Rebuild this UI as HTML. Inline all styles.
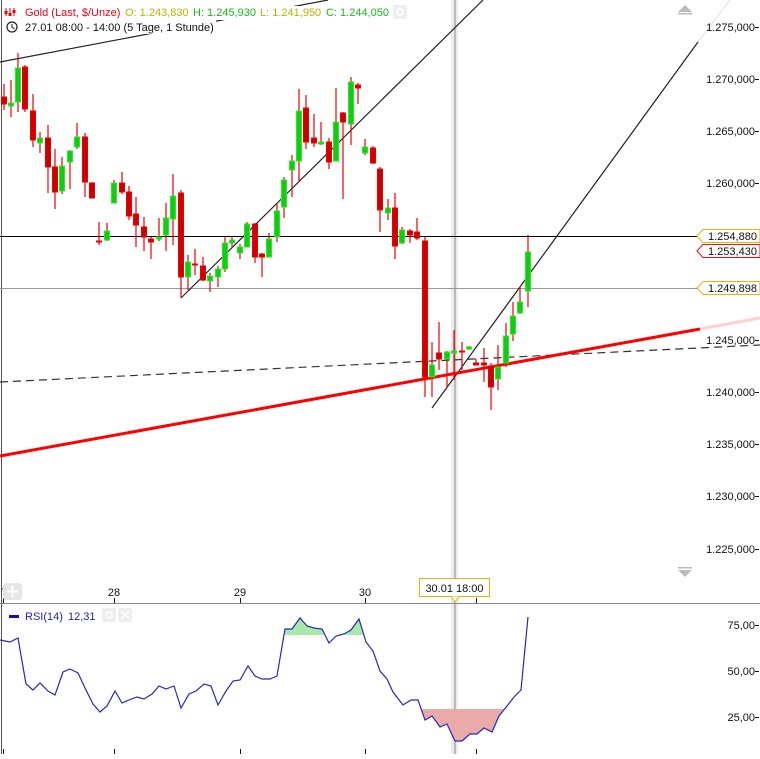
<!DOCTYPE html>
<html><head><meta charset="utf-8"><style>
html,body{margin:0;padding:0;background:#fff;}
body{width:760px;height:754px;overflow:hidden;font-family:"Liberation Sans",Arial,sans-serif;}
svg text{font-family:"Liberation Sans",Arial,sans-serif;font-size:11px;}
</style></head><body>
<svg width="760" height="754" viewBox="0 0 760 754" xmlns="http://www.w3.org/2000/svg">
<rect width="760" height="754" fill="#fff"/>
<rect x="451" y="0" width="7" height="754" fill="#ececec"/>
<line x1="455" y1="0" x2="455" y2="754" stroke="#888" stroke-width="1"/>
<line x1="1.5" y1="0" x2="1.5" y2="754" stroke="#555" stroke-width="1"/>

<line x1="0" y1="236.5" x2="700" y2="236.5" stroke="#000" stroke-width="1"/>
<line x1="0" y1="288.5" x2="700" y2="288.5" stroke="#999" stroke-width="1"/>
<line x1="0" y1="382" x2="760" y2="345" stroke="#333" stroke-width="1.2" stroke-dasharray="8,5"/>
<line x1="0" y1="62" x2="328" y2="0" stroke="#222" stroke-width="1.2"/>
<line x1="181" y1="298" x2="483" y2="0" stroke="#222" stroke-width="1.2"/>
<line x1="432" y1="408" x2="698" y2="42" stroke="#222" stroke-width="1.2"/>
<line x1="698" y1="42" x2="730" y2="0" stroke="#ddd" stroke-width="1"/>
<line x1="0" y1="456" x2="700" y2="329" stroke="#f00" stroke-width="3"/>
<line x1="700" y1="329" x2="760" y2="318" stroke="#ffd0d0" stroke-width="3"/>

<g stroke="#e00" stroke-width="1.2">
<line x1="4" y1="84" x2="4" y2="110"/><line x1="11" y1="80" x2="11" y2="117"/><line x1="18" y1="53" x2="18" y2="112"/><line x1="25" y1="65" x2="25" y2="112"/><line x1="33" y1="94" x2="33" y2="147"/><line x1="40" y1="132" x2="40" y2="153"/><line x1="48" y1="125" x2="48" y2="193"/><line x1="55" y1="149" x2="55" y2="209"/><line x1="62" y1="157" x2="62" y2="194"/><line x1="70" y1="150" x2="70" y2="189"/><line x1="77" y1="123" x2="77" y2="149"/><line x1="85" y1="133" x2="85" y2="197"/><line x1="92" y1="182" x2="92" y2="198"/><line x1="99" y1="222" x2="99" y2="245"/><line x1="107" y1="223" x2="107" y2="241"/><line x1="114" y1="180" x2="114" y2="203"/><line x1="122" y1="172" x2="122" y2="194"/><line x1="129" y1="186" x2="129" y2="220"/><line x1="136" y1="197" x2="136" y2="247"/><line x1="144" y1="217" x2="144" y2="251"/><line x1="151" y1="237" x2="151" y2="259"/><line x1="159" y1="218" x2="159" y2="241"/><line x1="166" y1="203" x2="166" y2="251"/><line x1="173" y1="174" x2="173" y2="245"/><line x1="181" y1="190" x2="181" y2="298"/><line x1="188" y1="255" x2="188" y2="290"/><line x1="195" y1="249" x2="195" y2="275"/><line x1="203" y1="257" x2="203" y2="281"/><line x1="210" y1="273" x2="210" y2="292"/><line x1="218" y1="266" x2="218" y2="287"/><line x1="225" y1="237" x2="225" y2="272"/><line x1="232" y1="237" x2="232" y2="248"/><line x1="240" y1="244" x2="240" y2="259"/><line x1="247" y1="222" x2="247" y2="247"/><line x1="255" y1="223" x2="255" y2="263"/><line x1="262" y1="253" x2="262" y2="277"/><line x1="269" y1="233" x2="269" y2="257"/><line x1="277" y1="203" x2="277" y2="242"/><line x1="284" y1="177" x2="284" y2="218"/><line x1="292" y1="155" x2="292" y2="197"/><line x1="299" y1="89" x2="299" y2="182"/><line x1="306" y1="95" x2="306" y2="149"/><line x1="314" y1="114" x2="314" y2="147"/><line x1="321" y1="122" x2="321" y2="145"/><line x1="329" y1="138" x2="329" y2="169"/><line x1="336" y1="88" x2="336" y2="161"/><line x1="343" y1="112" x2="343" y2="199"/><line x1="351" y1="77" x2="351" y2="145"/><line x1="358" y1="83" x2="358" y2="104"/><line x1="365" y1="139" x2="365" y2="155"/><line x1="373" y1="146" x2="373" y2="164"/><line x1="380" y1="167" x2="380" y2="232"/><line x1="388" y1="199" x2="388" y2="220"/><line x1="395" y1="193" x2="395" y2="259"/><line x1="402" y1="227" x2="402" y2="244"/><line x1="410" y1="229" x2="410" y2="243"/><line x1="417" y1="218" x2="417" y2="240"/><line x1="425" y1="237" x2="425" y2="397"/><line x1="432" y1="342" x2="432" y2="397"/><line x1="439" y1="322" x2="439" y2="370"/><line x1="447" y1="351" x2="447" y2="387"/><line x1="454" y1="330" x2="454" y2="380"/><line x1="462" y1="342" x2="462" y2="370"/><line x1="469" y1="346" x2="469" y2="350"/><line x1="476" y1="359" x2="476" y2="365"/><line x1="484" y1="348" x2="484" y2="382"/><line x1="491" y1="363" x2="491" y2="410"/><line x1="498" y1="345" x2="498" y2="390"/><line x1="506" y1="323" x2="506" y2="367"/><line x1="513" y1="302" x2="513" y2="341"/><line x1="520" y1="287" x2="520" y2="314"/><line x1="528" y1="235" x2="528" y2="307"/>
</g>
<g fill="#cc0000" stroke="#e00" stroke-width="1">
<rect x="1.5" y="97" width="5" height="7"/><rect x="22.5" y="67" width="5" height="42"/><rect x="30.5" y="111" width="5" height="29"/><rect x="45.5" y="138" width="5" height="29"/><rect x="52.5" y="167" width="5" height="25"/><rect x="82.5" y="137" width="5" height="45"/><rect x="89.5" y="183" width="5" height="15"/><rect x="96.5" y="241" width="5" height="1"/><rect x="119.5" y="183" width="5" height="9"/><rect x="126.5" y="192" width="5" height="24"/><rect x="133.5" y="214" width="5" height="11"/><rect x="141.5" y="227" width="5" height="10"/><rect x="148.5" y="239" width="5" height="3"/><rect x="178.5" y="193" width="5" height="84"/><rect x="192.5" y="264" width="5" height="1"/><rect x="200.5" y="266" width="5" height="14"/><rect x="252.5" y="224" width="5" height="33"/><rect x="259.5" y="254" width="5" height="3"/><rect x="303.5" y="108" width="5" height="34"/><rect x="311.5" y="138" width="5" height="5"/><rect x="326.5" y="142" width="5" height="20"/><rect x="340.5" y="113" width="5" height="9"/><rect x="355.5" y="85" width="5" height="3"/><rect x="370.5" y="148" width="5" height="15"/><rect x="377.5" y="169" width="5" height="41"/><rect x="392.5" y="208" width="5" height="38"/><rect x="407.5" y="231" width="5" height="4"/><rect x="414.5" y="232" width="5" height="6"/><rect x="422.5" y="241" width="5" height="136"/><rect x="436.5" y="353" width="5" height="6"/><rect x="459.5" y="351" width="5" height="1"/><rect x="473.5" y="363" width="5" height="2"/><rect x="481.5" y="363" width="5" height="2"/><rect x="488.5" y="366" width="5" height="21"/>
</g>
<g fill="#18c818" stroke="#22f022" stroke-width="1">
<rect x="8.5" y="103" width="5" height="3"/><rect x="15.5" y="68" width="5" height="34"/><rect x="37.5" y="138" width="5" height="5"/><rect x="59.5" y="166" width="5" height="25"/><rect x="67.5" y="151" width="5" height="11"/><rect x="74.5" y="137" width="5" height="10"/><rect x="104.5" y="231" width="5" height="9"/><rect x="111.5" y="183" width="5" height="20"/><rect x="156.5" y="237" width="5" height="2"/><rect x="163.5" y="218" width="5" height="17"/><rect x="170.5" y="196" width="5" height="23"/><rect x="185.5" y="262" width="5" height="15"/><rect x="207.5" y="276" width="5" height="5"/><rect x="215.5" y="269" width="5" height="8"/><rect x="222.5" y="243" width="5" height="26"/><rect x="229.5" y="240" width="5" height="3"/><rect x="237.5" y="247" width="5" height="6"/><rect x="244.5" y="224" width="5" height="23"/><rect x="266.5" y="239" width="5" height="18"/><rect x="274.5" y="211" width="5" height="26"/><rect x="281.5" y="180" width="5" height="27"/><rect x="289.5" y="161" width="5" height="9"/><rect x="296.5" y="111" width="5" height="50"/><rect x="318.5" y="142" width="5" height="2"/><rect x="333.5" y="122" width="5" height="39"/><rect x="348.5" y="82" width="5" height="42"/><rect x="362.5" y="147" width="5" height="6"/><rect x="385.5" y="208" width="5" height="5"/><rect x="399.5" y="230" width="5" height="13"/><rect x="429.5" y="365" width="5" height="12"/><rect x="444.5" y="352" width="5" height="7"/><rect x="451.5" y="351" width="5" height="2"/><rect x="466.5" y="347" width="5" height="2"/><rect x="495.5" y="367" width="5" height="12"/><rect x="503.5" y="336" width="5" height="27"/><rect x="510.5" y="316" width="5" height="18"/><rect x="517.5" y="302" width="5" height="11"/><rect x="525.5" y="252" width="5" height="39"/>
</g>

<!-- header backgrounds -->
<rect x="3" y="6" width="407" height="14" fill="#fff"/>
<rect x="3" y="20" width="213" height="14" fill="#fff"/>
<g fill="#e00" stroke="#e00">
<line x1="6" y1="8" x2="6" y2="16" stroke-width="1"/><line x1="10" y1="8" x2="10" y2="16"/><line x1="14" y1="8" x2="14" y2="16"/>
<rect x="4.5" y="11" width="3" height="3" stroke="none"/><rect x="8.5" y="13" width="3" height="3" stroke="none"/><rect x="12.5" y="10" width="3" height="3" stroke="none"/>
</g>
<text x="25" y="16" fill="#e8001c">Gold (Last, $/Unze)</text>
<text x="125" y="16" fill="#b8b400">O: 1.243,830</text>
<text x="193" y="16" fill="#18b818">H: 1.245,930</text>
<text x="260" y="16" fill="#b8b400">L: 1.241,950</text>
<text x="326" y="16" fill="#18b818">C: 1.244,050</text>
<rect x="393" y="5" width="14" height="14" rx="2" fill="#eee"/>
<circle cx="400" cy="12" r="3" fill="none" stroke="#fff" stroke-width="1.5"/>
<circle cx="12" cy="27" r="5" fill="none" stroke="#222" stroke-width="1.2"/>
<path d="M12 24 V27 L14.5 29" fill="none" stroke="#222" stroke-width="1.1"/>
<text x="25" y="31" fill="#111">27.01 08:00 - 14:00 (5 Tage, 1 Stunde)</text>

<path d="M678 12 L685 5 L692 12 Z" fill="#bbb"/><rect x="678" y="13" width="14" height="1.5" fill="#bbb"/>
<path d="M678 570 L685 577 L692 570 Z" fill="#bbb"/><rect x="678" y="567" width="14" height="1.5" fill="#bbb"/>

<g fill="#111" text-anchor="end">
<text x="755" y="31">1.275,000</text><text x="755" y="83">1.270,000</text><text x="755" y="135">1.265,000</text><text x="755" y="187">1.260,000</text><text x="755" y="344">1.245,000</text><text x="755" y="396">1.240,000</text><text x="755" y="448">1.235,000</text><text x="755" y="500">1.230,000</text><text x="755" y="553">1.225,000</text>
</g>
<g stroke="#111"><line x1="755" y1="27.5" x2="759" y2="27.5"/><line x1="755" y1="79.5" x2="759" y2="79.5"/><line x1="755" y1="131.5" x2="759" y2="131.5"/><line x1="755" y1="183.5" x2="759" y2="183.5"/><line x1="755" y1="340.5" x2="759" y2="340.5"/><line x1="755" y1="392.5" x2="759" y2="392.5"/><line x1="755" y1="444.5" x2="759" y2="444.5"/><line x1="755" y1="496.5" x2="759" y2="496.5"/><line x1="755" y1="549.5" x2="759" y2="549.5"/></g>
<path d="M697 236 L703 229.5 H760 V242.5 H703 Z" fill="#fff" stroke="#e8b010"/>
<text x="708" y="240" fill="#111">1.254,880</text>
<path d="M697 251 L703 244.5 H760 V257.5 H703 Z" fill="#fff" stroke="#e81010"/>
<text x="708" y="255" fill="#111">1.253,430</text>
<path d="M697 288 L703 281.5 H760 V294.5 H703 Z" fill="#fff" stroke="#e8b010"/>
<text x="708" y="292" fill="#111">1.249,898</text>

<line x1="0" y1="603.5" x2="760" y2="603.5" stroke="#888"/>
<g stroke="#111"><line x1="3.5" y1="598" x2="3.5" y2="603"/><line x1="114.5" y1="598" x2="114.5" y2="603"/><line x1="240.5" y1="598" x2="240.5" y2="603"/><line x1="365.5" y1="598" x2="365.5" y2="603"/><line x1="476.5" y1="598" x2="476.5" y2="603"/></g>
<g fill="#111" text-anchor="middle"><text x="114" y="596">28</text><text x="240" y="596">29</text><text x="365" y="596">30</text><text x="4" y="596">7</text></g>
<rect x="3" y="583" width="19" height="17" rx="3" fill="#e6e6e6"/>
<path d="M12.5 586 V597 M7 591.5 H18" stroke="#fff" stroke-width="2"/>
<rect x="419.5" y="578.5" width="70" height="18" fill="#fff" stroke="#e8b010"/>
<path d="M451 596.5 L455 602 L459 596.5" fill="#fff" stroke="#e8b010"/>
<text x="454.5" y="592" fill="#111" text-anchor="middle">30.01 18:00</text>

<g stroke="#111"><line x1="3.5" y1="749" x2="3.5" y2="754"/><line x1="114.5" y1="749" x2="114.5" y2="754"/><line x1="240.5" y1="749" x2="240.5" y2="754"/><line x1="365.5" y1="749" x2="365.5" y2="754"/><line x1="476.5" y1="749" x2="476.5" y2="754"/></g>
<rect x="9" y="615" width="10" height="3" fill="#1010c0"/>
<text x="25" y="620" fill="#2020c0">RSI(14)</text><text x="68" y="620" fill="#2020c0">12,31</text>
<rect x="102" y="608" width="14" height="14" rx="2" fill="#eee"/><circle cx="109" cy="615" r="3" fill="none" stroke="#fff" stroke-width="1.5"/>
<rect x="118" y="608" width="14" height="14" rx="2" fill="#eee"/><path d="M121 611 L129 619 M129 611 L121 619" stroke="#fff" stroke-width="1.5"/>
<path d="M285 635 L285 629 L292 629 L300 618 L307 626 L314 628 L322 629 L324 635 Z M344 635 L344 634 L351 630 L359 619 L363 635 Z" fill="#a8e8a8"/>
<path d="M421 709 L425 720 L432 716 L440 727 L447 724 L455 741 L462 741 L470 734 L477 734 L484 728 L492 732 L499 716 L504 709 Z" fill="#eaaaaa"/>
<polyline fill="none" stroke="#2828b8" stroke-width="1.2" points="0,640 10,642 18,638 26,684 33,690 40,683 48,691 55,695 63,672 70,669 78,673 85,688 93,704 100,712 107,706 115,691 122,703 129,700 137,697 144,699 152,694 159,686 166,689 174,686 181,708 189,694 196,691 204,684 211,686 218,705 226,691 233,681 240,680 248,666 255,676 262,679 270,679 277,676 285,629 292,629 300,618 307,626 314,628 322,629 329,643 336,636 344,634 351,630 359,619 366,642 373,651 380,671 387,679 393,692 403,705 411,700 418,700 425,720 432,716 440,727 447,724 455,741 462,741 470,734 477,734 484,728 492,732 499,716 507,706 514,697 521,690 528,617"/>
<g fill="#111" text-anchor="end"><text x="755" y="629">75,00</text><text x="755" y="675">50,00</text><text x="755" y="721">25,00</text></g>
<g stroke="#111"><line x1="755" y1="625.5" x2="759" y2="625.5"/><line x1="755" y1="671.5" x2="759" y2="671.5"/><line x1="755" y1="717.5" x2="759" y2="717.5"/></g>
</svg>
</body></html>
